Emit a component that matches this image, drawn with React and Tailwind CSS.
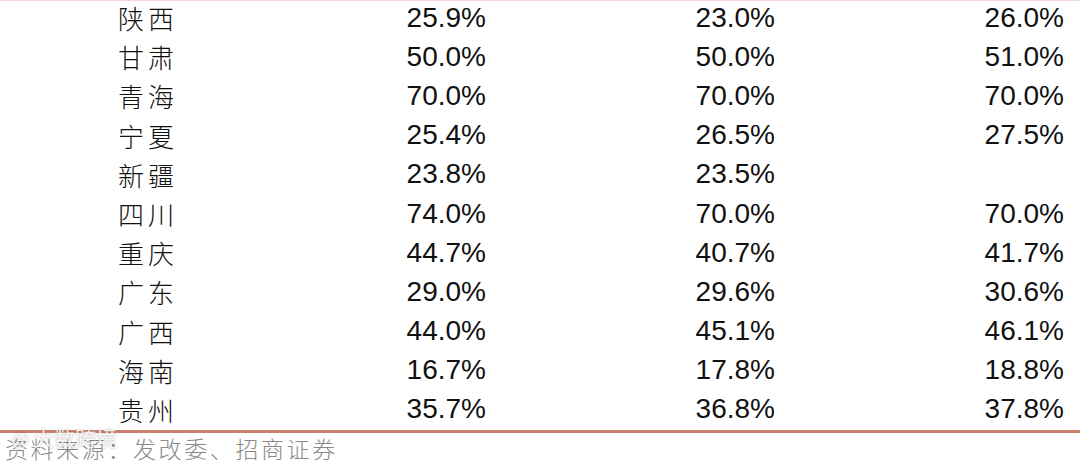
const rows = [
  ["陕西", "25.9%", "23.0%", "26.0%"],
  ["甘肃", "50.0%", "50.0%", "51.0%"],
  ["青海", "70.0%", "70.0%", "70.0%"],
  ["宁夏", "25.4%", "26.5%", "27.5%"],
  ["新疆", "23.8%", "23.5%", ""],
  ["四川", "74.0%", "70.0%", "70.0%"],
  ["重庆", "44.7%", "40.7%", "41.7%"],
  ["广东", "29.0%", "29.6%", "30.6%"],
  ["广西", "44.0%", "45.1%", "46.1%"],
  ["海南", "16.7%", "17.8%", "18.8%"],
  ["贵州", "35.7%", "36.8%", "37.8%"],
];

const cjk = { fontFamily: '"Noto Sans CJK SC", sans-serif' };
const num = { fontFamily: '"Liberation Sans", Arial, sans-serif' };

export default function App() {
  return (
    <div className="w-[1080px] h-[461px] bg-white overflow-hidden relative">
      <div className="h-px bg-[#f3d6cf]" />
      <div className="-mt-[3px]">
        {rows.map((r) => (
          <div key={r[0]} className="h-[39.2px] flex items-center text-[#111]">
            <div className="w-[118px]" />
            <div className="w-[200px] text-[26px] font-light tracking-[4px]" style={cjk}>{r[0]}</div>
            <div className="w-[168px] text-right text-[28px] leading-none" style={num}>{r[1]}</div>
            <div className="w-[289px] text-right text-[28px] leading-none" style={num}>{r[2]}</div>
            <div className="w-[289px] text-right text-[28px] leading-none" style={num}>{r[3]}</div>
          </div>
        ))}
      </div>
      <div className="h-[3px] bg-[#c8806a] mt-[1px]" />
      <div className="pl-[5px] pt-[4px] text-[23px] text-[#8a8a8a] font-light tracking-[2.6px] leading-none" style={cjk}>
        资料来源：发改委、招商证券
      </div>
      <div className="absolute left-[12px] top-[427px] flex items-center gap-1 text-[21px] text-white/90 leading-none [text-shadow:0_0_2px_rgba(0,0,0,0.35)]" style={cjk}>
        <span className="text-[18px]">@</span>
        <span>大数跨境</span>
      </div>
    </div>
  );
}
